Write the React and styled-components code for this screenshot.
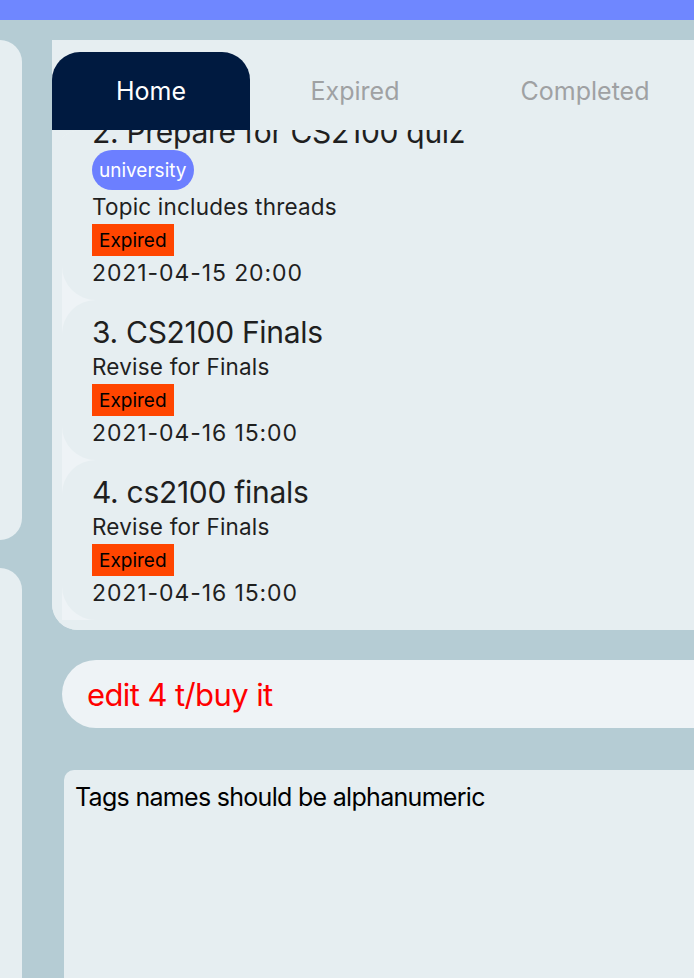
import React from 'react';
import styled, { createGlobalStyle } from 'styled-components';

const GlobalStyle = createGlobalStyle`
  html, body {
    margin: 0;
    padding: 0;
    background: #b5ccd4;
    overflow: hidden;
    font-family: Inter, "Noto Sans", "Liberation Sans", sans-serif;
  }
`;

const tasks = [
  {
    id: 2,
    title: 'Prepare for CS2100 quiz',
    tags: ['university'],
    description: 'Topic includes threads',
    status: 'Expired',
    date: '2021-04-15 20:00'
  },
  {
    id: 3,
    title: 'CS2100 Finals',
    tags: [],
    description: 'Revise for Finals',
    status: 'Expired',
    date: '2021-04-16 15:00'
  },
  {
    id: 4,
    title: 'cs2100 finals',
    tags: [],
    description: 'Revise for Finals',
    status: 'Expired',
    date: '2021-04-16 15:00'
  }
];

class App extends React.Component {
  render() {
    return (
      <WindowStyle>
        <GlobalStyle />
        <TopBarStyle />
        <BodyStyle>
          <SidebarStyle>
            <SidePanelStyle $height="500px" $radius="0 22px 22px 0" />
            <SidePanelStyle $radius="0 22px 0 0" />
          </SidebarStyle>

          <MainColumnStyle>
            <TaskPanelStyle>
              <TabBarStyle>
                <TabStyle $active $width="198px">Home</TabStyle>
                <TabStyle $width="210px">Expired</TabStyle>
                <TabStyle $width="250px">Completed</TabStyle>
              </TabBarStyle>

              <TaskListStyle>
                <ListInnerStyle>
                  {tasks.map((task) => (
                    <CellStyle key={task.id}>
                      <CardStyle>
                        <TitleStyle>{task.id}. {task.title}</TitleStyle>
                        {task.tags.map((tag) => (
                          <TagStyle key={tag}>{tag}</TagStyle>
                        ))}
                        <DescriptionStyle>{task.description}</DescriptionStyle>
                        <StatusStyle>{task.status}</StatusStyle>
                        <DateStyle>{task.date}</DateStyle>
                      </CardStyle>
                    </CellStyle>
                  ))}
                </ListInnerStyle>
              </TaskListStyle>
            </TaskPanelStyle>

            <CommandBoxStyle>edit 4 t/buy it</CommandBoxStyle>

            <ResultBoxStyle>Tags names should be alphanumeric</ResultBoxStyle>
          </MainColumnStyle>
        </BodyStyle>
      </WindowStyle>
    );
  }
}

var WindowStyle = styled.div`
  height: 978px;
  display: flex;
  flex-direction: column;
  overflow: hidden;
`;

var TopBarStyle = styled.div`
  height: 20px;
  background: #6f87ff;
  flex-shrink: 0;
`;

var BodyStyle = styled.div`
  flex: 1;
  min-height: 0;
  display: flex;
  gap: 30px;
  padding-top: 20px;
`;

var SidebarStyle = styled.div`
  width: 22px;
  flex-shrink: 0;
  display: flex;
  flex-direction: column;
  gap: 28px;
`;

var SidePanelStyle = styled.div`
  background: #e6eef1;
  border-radius: ${(p) => p.$radius};
  height: ${(p) => p.$height || 'auto'};
  flex: ${(p) => (p.$height ? '0 0 auto' : '1')};
`;

var MainColumnStyle = styled.div`
  flex: 1;
  margin-right: -40px;
  display: flex;
  flex-direction: column;
`;

var TaskPanelStyle = styled.div`
  height: 590px;
  flex-shrink: 0;
  background: #e6eef1;
  border-radius: 0 0 0 26px;
  display: flex;
  flex-direction: column;
  overflow: hidden;
`;

var TabBarStyle = styled.div`
  height: 78px;
  padding-top: 12px;
  display: flex;
  flex-shrink: 0;
`;

var TabStyle = styled.div`
  width: ${(p) => p.$width};
  display: flex;
  align-items: center;
  justify-content: center;
  font-size: 25px;
  color: ${(p) => (p.$active ? '#ffffff' : '#9fa1a3')};
  background: ${(p) => (p.$active ? '#001a40' : 'transparent')};
  border-radius: 28px 28px 0 0;
`;

var TaskListStyle = styled.div`
  flex: 1;
  min-height: 0;
  overflow: hidden;
  padding-left: 10px;
  border-radius: 30px 0 0 0;
  background: #e6eef1;
`;

var ListInnerStyle = styled.div`
  margin-top: -30px;
`;

var CellStyle = styled.div`
  background: #eef3f6;
`;

var CardStyle = styled.div`
  background: #e6eef1;
  border-radius: 34px;
  padding: 14px 0 10px 30px;
  display: flex;
  flex-direction: column;
  align-items: flex-start;
  color: #1f1f1f;
`;

var TitleStyle = styled.div`
  font-size: 30px;
  line-height: 36px;
  letter-spacing: -0.3px;
  white-space: nowrap;
`;

var TagStyle = styled.div`
  height: 40px;
  display: flex;
  align-items: center;
  padding: 0 7px;
  box-sizing: border-box;
  border-radius: 20px;
  background: #6c7fff;
  color: #ffffff;
  font-size: 19px;
`;

var DescriptionStyle = styled.div`
  font-size: 22.5px;
  line-height: 34px;
  letter-spacing: 0.2px;
`;

var StatusStyle = styled.div`
  height: 32px;
  display: flex;
  align-items: center;
  padding: 0 7px;
  background: #ff4500;
  color: #000000;
  font-size: 19px;
`;

var DateStyle = styled.div`
  font-size: 23px;
  line-height: 34px;
  letter-spacing: 0.9px;
`;

var CommandBoxStyle = styled.div`
  height: 68px;
  flex-shrink: 0;
  margin: 30px 0 0 10px;
  padding-left: 25px;
  display: flex;
  align-items: center;
  background: #eef3f6;
  border-radius: 34px 0 0 34px;
  color: #ff0000;
  font-size: 31px;
  letter-spacing: -0.6px;
`;

var ResultBoxStyle = styled.div`
  flex: 1;
  margin: 42px 0 0 12px;
  padding: 12px 11px;
  background: #e6eef1;
  border-radius: 10px 0 0 0;
  color: #000000;
  font-size: 25px;
  line-height: 30px;
  letter-spacing: -0.7px;
`;

export default App;
